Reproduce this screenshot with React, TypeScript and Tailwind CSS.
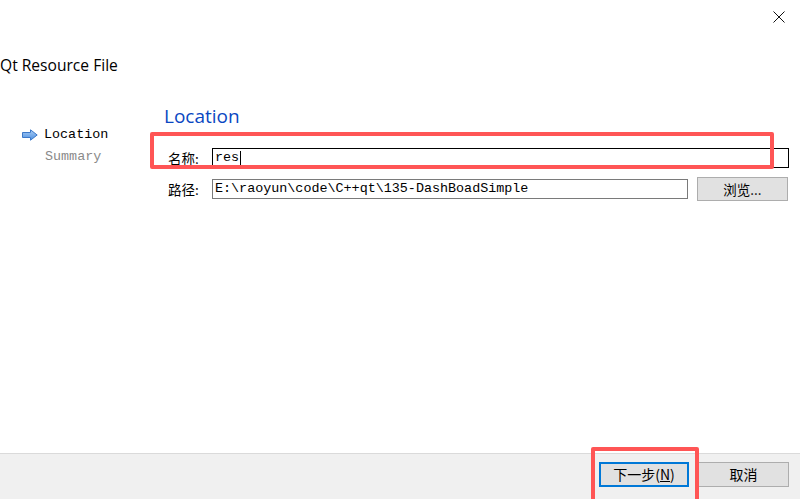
import React from 'react';

const mono = { fontFamily: '"Liberation Mono", "Noto Sans CJK SC", monospace' };
const cjk = { fontFamily: '"Noto Sans CJK SC", "Liberation Sans", sans-serif' };

const ArrowIcon = () => (
  <svg width="16" height="12" viewBox="0 0 16 12">
    <defs>
      <linearGradient id="arrowFill" x1="0" y1="0" x2="0" y2="1">
        <stop offset="0" stopColor="#a9cdf5" />
        <stop offset="1" stopColor="#4d8fe0" />
      </linearGradient>
    </defs>
    <path d="M0.5 3.5 H8.5 V0.8 L15.2 6 L8.5 11.2 V8.5 H0.5 Z" fill="url(#arrowFill)" stroke="#3c78c8" strokeWidth="1" />
  </svg>
);

const CloseIcon = () => (
  <svg width="12" height="12" viewBox="0 0 12 12">
    <path d="M0.5 0.5 L11.5 11.5 M11.5 0.5 L0.5 11.5" stroke="#111" strokeWidth="1" />
  </svg>
);

const Field = ({ label, children }: { label: string; children: React.ReactNode }) => (
  <div className="flex items-center">
    <span className="w-[48px] pl-[4px] text-[13.5px] text-black" style={cjk}>
      {label}
    </span>
    {children}
  </div>
);

export default function App() {
  return (
    <div className="relative flex h-[499px] w-[800px] flex-col overflow-hidden bg-white">
      <div className="flex-1">
        <div className="flex justify-end pr-[15px] pt-[11px]">
          <CloseIcon />
        </div>

        <h1
          className="mt-[32px] text-[15.6px] leading-[20px] text-black"
          style={{ fontFamily: '"Open Sans", "Noto Sans", sans-serif' }}
        >
          Qt Resource File
        </h1>

        <div className="mt-[29px] flex">
          {/* wizard steps */}
          <div className="w-[164px] pl-[22px] pt-[20px]">
            <div className="flex items-center gap-[6px] text-[13.4px] leading-[22px] text-black" style={mono}>
              <ArrowIcon />
              <span>Location</span>
            </div>
            <div className="pl-[23px] text-[13.4px] leading-[22px] text-[#8a8a8a]" style={mono}>
              Summary
            </div>
          </div>

          <div className="flex-1 pr-[11px]">
            <h2
              className="text-[19px] leading-[24px] text-[#0a47c2]"
              style={{ fontFamily: '"Open Sans", "Noto Sans", sans-serif' }}
            >
              Location
            </h2>

            <div className="mt-[20px] flex flex-col gap-[9px]">
              <Field label="名称:">
                <div className="flex h-[20px] flex-1 items-center border border-black px-[2px] text-[13.4px]" style={mono}>
                  res<span className="ml-[1px] inline-block h-[15px] w-px bg-black" />
                </div>
              </Field>
              <Field label="路径:">
                <div className="flex h-[20px] w-[476px] items-center border border-[#7a7a7a] px-[2px] text-[13.4px]" style={mono}>
                  E:\raoyun\code\C++qt\135-DashBoadSimple
                </div>
                <button
                  className="ml-[9px] h-[24px] w-[91px] border border-[#adadad] bg-[#e1e1e1] text-[13.5px] text-black"
                  style={cjk}
                >
                  浏览...
                </button>
              </Field>
            </div>
          </div>
        </div>
      </div>

      <div className="flex h-[46px] justify-end gap-[9px] border-t border-[#dadada] bg-[#f0f0f0] pr-[11px] pt-[8px]">
        <button
          className="h-[25px] w-[90px] border-2 border-[#0078d7] bg-[#e1e1e1] text-[14px] text-black"
          style={cjk}
        >
          下一步(<span className="underline">N</span>)
        </button>
        <button
          className="h-[25px] w-[91px] border border-[#adadad] bg-[#e1e1e1] text-[14px] text-black"
          style={cjk}
        >
          取消
        </button>
      </div>

      {/* highlight marks drawn over the dialog */}
      <div className="pointer-events-none absolute left-[150px] top-[132px] h-[37px] w-[624px] rounded-[2px] border-[4px] border-[#ff5555]" />
      <div className="pointer-events-none absolute left-[591px] top-[447px] h-[56px] w-[108px] rounded-[2px] border-[4px] border-[#ff5555]" />
    </div>
  );
}
